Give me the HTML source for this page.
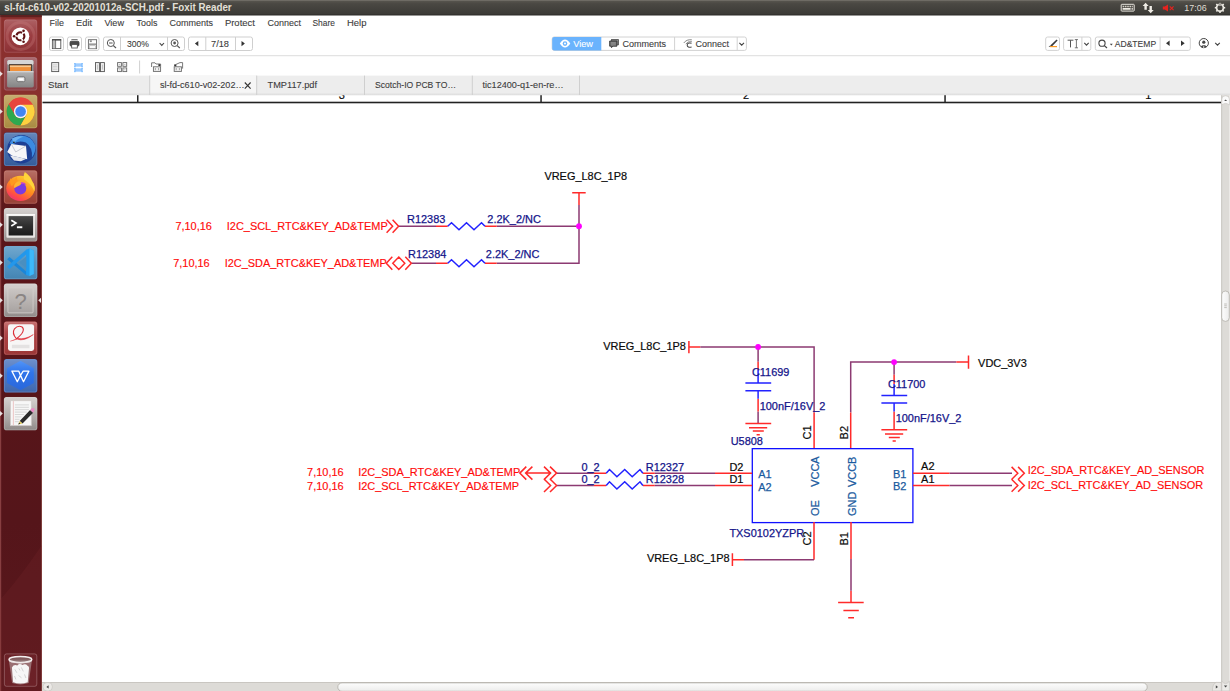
<!DOCTYPE html>
<html lang="en">
<head>
<meta charset="utf-8">
<title>sl-fd-c610-v02-20201012a-SCH.pdf - Foxit Reader</title>
<style>
html,body{margin:0;padding:0;background:#fff;}
body{width:1230px;height:691px;overflow:hidden;position:relative;font-family:"Liberation Sans",sans-serif;}
svg{position:absolute;left:0;top:0;display:block;}
text{font-family:"Liberation Sans",sans-serif;}
.ui{font-size:9.4px;fill:#3c3c3c;stroke:#3c3c3c;stroke-width:0.1px;}
.sch{font-size:10.95px;}
.red{fill:#ff0a0a;stroke:#ff0a0a;stroke-width:0.15px;}
.navy{fill:#14148a;stroke:#14148a;stroke-width:0.25px;}
.blk{fill:#0a0a0a;stroke:#0a0a0a;stroke-width:0.2px;}
.pin{fill:#1a5a9e;stroke:#1a5a9e;stroke-width:0.25px;}
.w{stroke:#8c3a72;stroke-width:1.5;fill:none;}
.r{stroke:#ff2a2a;stroke-width:1.5;fill:none;}
.b{stroke:#2222ff;stroke-width:1.5;fill:none;}
</style>
</head>
<body>
<svg width="1230" height="691" viewBox="0 0 1230 691">
<defs>
<linearGradient id="gTitle" x1="0" y1="0" x2="0" y2="1"><stop offset="0" stop-color="#5b5851"/><stop offset="0.25" stop-color="#4a4843"/><stop offset="1" stop-color="#3a3935"/></linearGradient>
<linearGradient id="gLaunch" x1="0" y1="0" x2="0" y2="1"><stop offset="0" stop-color="#8c302e"/><stop offset="0.155" stop-color="#88302d"/><stop offset="0.2" stop-color="#6e2023"/><stop offset="0.26" stop-color="#601a1d"/><stop offset="0.32" stop-color="#5a1519"/><stop offset="0.75" stop-color="#55151a"/><stop offset="1" stop-color="#5a181d"/></linearGradient>
<linearGradient id="gThumb" x1="0" y1="0" x2="0" y2="1"><stop offset="0" stop-color="#fdfdfd"/><stop offset="1" stop-color="#ececeb"/></linearGradient>
<linearGradient id="gThumbV" x1="0" y1="0" x2="1" y2="0"><stop offset="0" stop-color="#fdfdfd"/><stop offset="1" stop-color="#ececeb"/></linearGradient>
<linearGradient id="gGloss" x1="0" y1="0" x2="0" y2="1"><stop offset="0" stop-color="#fff" stop-opacity="0.22"/><stop offset="0.5" stop-color="#fff" stop-opacity="0.04"/><stop offset="1" stop-color="#000" stop-opacity="0.08"/></linearGradient>
<linearGradient id="gDrawer" x1="0" y1="0" x2="0" y2="1"><stop offset="0" stop-color="#b4b4b4"/><stop offset="1" stop-color="#858585"/></linearGradient>
<linearGradient id="gUnk" x1="0" y1="0" x2="0" y2="1"><stop offset="0" stop-color="#cbc6c4"/><stop offset="1" stop-color="#a7a2a0"/></linearGradient>
<linearGradient id="gFox" x1="0.8" y1="0.1" x2="0.25" y2="1"><stop offset="0" stop-color="#ffcb30"/><stop offset="0.45" stop-color="#ff8a1e"/><stop offset="0.8" stop-color="#ff4a4a"/><stop offset="1" stop-color="#f0307a"/></linearGradient>
<clipPath id="docClip"><rect x="42" y="95.2" width="1179.2" height="586.4"/></clipPath>
<linearGradient id="gTabSh" x1="0" y1="0" x2="0" y2="1"><stop offset="0" stop-color="#ededed"/><stop offset="1" stop-color="#d9d9d9"/></linearGradient>
<linearGradient id="gTerm" x1="0" y1="0" x2="0" y2="1"><stop offset="0" stop-color="#4a4a4a"/><stop offset="0.5" stop-color="#2e2e2e"/><stop offset="1" stop-color="#1c1c1c"/></linearGradient>
<linearGradient id="gGreyTile" x1="0" y1="0" x2="0" y2="1"><stop offset="0" stop-color="#c9c4c2"/><stop offset="1" stop-color="#9c9694"/></linearGradient>
<linearGradient id="gRedTile" x1="0" y1="0" x2="0" y2="1"><stop offset="0" stop-color="#b84a4a"/><stop offset="0.3" stop-color="#a63436"/><stop offset="1" stop-color="#a83a3a"/></linearGradient>
<linearGradient id="gWps" x1="0" y1="0" x2="0" y2="1"><stop offset="0" stop-color="#4f92f6"/><stop offset="0.4" stop-color="#2f74ea"/><stop offset="1" stop-color="#2a68dc"/></linearGradient>
</defs>

<!-- ===== window background ===== -->
<rect x="0" y="0" width="1230" height="691" fill="#ffffff"/>

<!-- ===== title / top panel ===== -->
<g id="titlebar">
<rect x="0" y="0" width="1230" height="15.3" fill="url(#gTitle)"/>
<rect x="0" y="0" width="1230" height="1" fill="#77756e" opacity="0.7"/>
<rect x="0" y="14.5" width="1230" height="0.8" fill="#2c2b28"/>
<text x="4.2" y="11.2" font-size="10.2" font-weight="bold" fill="#e4e0d8" textLength="227.5" lengthAdjust="spacingAndGlyphs">sl-fd-c610-v02-20201012a-SCH.pdf - Foxit Reader</text>
</g>

<!-- ===== menu bar ===== -->
<g id="menubar" class="ui">
<text x="49.5" y="26.1" textLength="14.4" lengthAdjust="spacingAndGlyphs">File</text>
<text x="76.1" y="26.1" textLength="16" lengthAdjust="spacingAndGlyphs">Edit</text>
<text x="104.4" y="26.1" textLength="19.6" lengthAdjust="spacingAndGlyphs">View</text>
<text x="136.6" y="26.1" textLength="20.8" lengthAdjust="spacingAndGlyphs">Tools</text>
<text x="169.5" y="26.1" textLength="43.5" lengthAdjust="spacingAndGlyphs">Comments</text>
<text x="224.9" y="26.1" textLength="30" lengthAdjust="spacingAndGlyphs">Protect</text>
<text x="267.5" y="26.1" textLength="33.5" lengthAdjust="spacingAndGlyphs">Connect</text>
<text x="312.5" y="26.1" textLength="22.5" lengthAdjust="spacingAndGlyphs">Share</text>
<text x="347" y="26.1" textLength="19.5" lengthAdjust="spacingAndGlyphs">Help</text>
</g>

<!-- ===== toolbar row 1 ===== -->
<g id="toolbar1">
<rect x="42" y="55.2" width="1188" height="1" fill="#dcdcdc"/>
<g fill="#fff" stroke="#cfcfcf" stroke-width="1">
<rect x="49.5" y="37" width="14" height="13.5" rx="2"/>
<rect x="67.5" y="37" width="14" height="13.5" rx="2"/>
<rect x="85.5" y="37" width="13.5" height="13.5" rx="2"/>
<rect x="103.5" y="37" width="81" height="13.5" rx="2"/>
<rect x="188.5" y="37" width="64" height="13.5" rx="2"/>
</g>
<g stroke="#cfcfcf" stroke-width="1">
<line x1="120.5" y1="37" x2="120.5" y2="50.5"/><line x1="167.5" y1="37" x2="167.5" y2="50.5"/>
<line x1="205.8" y1="37" x2="205.8" y2="50.5"/><line x1="235.5" y1="37" x2="235.5" y2="50.5"/>
</g>
<text class="ui" x="127" y="46.9" textLength="22" lengthAdjust="spacingAndGlyphs">300%</text>
<text class="ui" x="211" y="46.9" textLength="18" lengthAdjust="spacingAndGlyphs">7/18</text>
</g>

<!-- toolbar row 1 icons -->
<g id="tb1icons" fill="none" stroke="#4a4a4a" stroke-width="1">
<!-- panel toggle -->
<rect x="52.4" y="39.8" width="8.4" height="8.8" stroke="#555" stroke-width="0.9"/><rect x="52.9" y="40.6" width="2.4" height="7.6" fill="#b9b9b9" stroke="none"/><line x1="55.6" y1="39.8" x2="55.6" y2="48.6" stroke="#555" stroke-width="0.8"/><line x1="52" y1="39.8" x2="61.2" y2="39.8" stroke="#444" stroke-width="1.3"/>
<!-- printer -->
<path d="M71.4 39.5H77.6" stroke="#555" stroke-width="0.8"/><rect x="70" y="41.2" width="9" height="5" rx="1.4" fill="#4a4a4a" stroke="#3a3a3a" stroke-width="0.8"/><rect x="71.7" y="44.4" width="5.6" height="3.6" fill="#fff" stroke="#444" stroke-width="0.8"/>
<!-- save -->
<rect x="88.4" y="39.7" width="8.2" height="9" stroke="#666" stroke-width="0.9"/><rect x="89.8" y="40.3" width="2" height="1.8" fill="#8a8a8a" stroke="none"/><rect x="88.9" y="43.4" width="7.2" height="1.8" fill="#9a9a9a" stroke="none"/><rect x="89.6" y="45.8" width="5.8" height="2.4" fill="#fff" stroke="#9a9a9a" stroke-width="0.5"/>
<!-- zoom out -->
<circle cx="110.8" cy="43" r="3.5" stroke="#555"/><line x1="113.4" y1="45.6" x2="116" y2="48" stroke="#555" stroke-width="1.2"/><line x1="109" y1="43" x2="112.6" y2="43" stroke="#555"/>
<!-- dropdown chevron -->
<path d="M159.6 43L161.8 45.4L164 43" stroke="#444" stroke-width="1.1"/>
<!-- zoom in -->
<circle cx="174.6" cy="43" r="3.5" stroke="#555"/><line x1="177.2" y1="45.6" x2="179.8" y2="48" stroke="#555" stroke-width="1.2"/><circle cx="174.6" cy="43" r="1.4" fill="#555" stroke="none"/>
<!-- prev / next page -->
<path d="M198.3 41L194.9 43.6L198.3 46.2Z" fill="#333" stroke="none"/>
<path d="M241.5 41L244.9 43.6L241.5 46.2Z" fill="#333" stroke="none"/>
</g>
<!-- toolbar row 2 icons -->
<g id="tb2icons" fill="none" stroke="#5a5a5a" stroke-width="0.9">
<rect x="51.7" y="62.6" width="7" height="9" fill="#f1f1f1" stroke="#555"/><path d="M53 64.8H57.4M53 66.4H57.4M53 68H57.4M53 69.6H57.4" stroke="#c4c4c4" stroke-width="0.7"/>
<g stroke="#58a9ff" stroke-width="0.8"><rect x="74.9" y="64" width="7.2" height="2" fill="#cfe4ff"/><rect x="74.9" y="69" width="7.2" height="2" fill="#cfe4ff"/><path d="M74.9 63V64M82.1 63V64M74.9 66V67.2M82.1 66V67.2M74.9 67.8V69M82.1 67.8V69M74.9 71V72.2M82.1 71V72.2" stroke-width="1"/></g>
<rect x="95.5" y="62.6" width="3.9" height="9" fill="#f1f1f1" stroke="#555"/><rect x="100.5" y="62.6" width="3.9" height="9" fill="#f1f1f1" stroke="#555"/><path d="M97.45 64.6V69.6M102.45 64.6V69.6" stroke="#b5b5b5" stroke-width="0.8"/>
<g stroke="#666" stroke-width="0.9" fill="#fafafa"><rect x="117.6" y="62.6" width="3.8" height="3.7"/><rect x="122.9" y="62.6" width="3.8" height="3.7"/><rect x="117.6" y="67.9" width="3.8" height="3.7"/><rect x="122.9" y="67.9" width="3.8" height="3.7"/><path d="M118.8 64.5H120.2M124.1 64.5H125.5M118.8 69.8H120.2M124.1 69.8H125.5" stroke="#aaa" stroke-width="0.7"/></g>
<g stroke="#6a6a6a" stroke-width="0.9"><path d="M151.6 67V62.8H155L156 64H160.6V66.6"/><rect x="153.4" y="66.8" width="7.2" height="4.6" fill="#f2f2f2"/><path d="M155.4 68V70.2M158.6 68V70.2" stroke="#999"/><rect x="158.4" y="64.2" width="1.8" height="1.8" fill="#333" stroke="none"/></g>
<g stroke="#6a6a6a" stroke-width="0.9"><path d="M176 66.6V64.4L180 62.6H182.6V68.6"/><rect x="174.2" y="66.8" width="7.2" height="4.6" fill="#f2f2f2"/><path d="M176.2 68V70.2M179.4 68V70.2" stroke="#999"/><rect x="174.2" y="64.4" width="1.8" height="1.8" fill="#333" stroke="none"/></g>
</g>
<!-- centre mode buttons -->
<g id="modes">
<rect x="552.2" y="37" width="194.2" height="13.4" rx="2" fill="#fff" stroke="#d2d2d2" stroke-width="1"/>
<path d="M554.2 37H601.3V50.4H554.2A2 2 0 0 1 552.2 48.4V39A2 2 0 0 1 554.2 37Z" fill="#6ab3fd"/>
<line x1="674.6" y1="37" x2="674.6" y2="50.4" stroke="#d2d2d2"/><line x1="737.2" y1="37" x2="737.2" y2="50.4" stroke="#d2d2d2"/>
<!-- eye -->
<path d="M559.8 43.6Q565 35.6 570.3 43.6Q565 51.6 559.8 43.6Z" fill="#fff"/><circle cx="565" cy="43.6" r="2.3" fill="#6ab3fd"/><circle cx="565" cy="43.6" r="1" fill="#fff"/>
<text class="ui" x="573.2" y="46.7" fill="#ffffff" style="fill:#fff;stroke:#fff" textLength="19.8" lengthAdjust="spacingAndGlyphs">View</text>
<!-- comments icon -->
<rect x="611.4" y="39.6" width="7" height="5.2" fill="#8a8a8a" stroke="#4a4a4a" stroke-width="0.8"/><path d="M609.7 41H616.9V46.2H613L611.4 47.6V46.2H609.7Z" fill="#6e6e6e" stroke="#333" stroke-width="0.9" stroke-linejoin="round"/><path d="M610.8 42.6H615.8M610.8 43.8H615.8M610.8 45H615.8" stroke="#a8a8a8" stroke-width="0.5"/>
<text class="ui" x="622.4" y="46.7" textLength="43.7" lengthAdjust="spacingAndGlyphs">Comments</text>
<!-- connect icon -->
<g fill="none" stroke="#7a7a7a" stroke-width="0.9"><path d="M683.8 43Q686.4 39.2 691.8 39.8M685.8 44Q687.8 41.2 691.8 41.6"/><path d="M691.6 43.2Q687.2 42.2 687.2 45.2Q687.4 48 691.6 47" stroke="#4a4a4a" stroke-width="1.1"/></g>
<text class="ui" x="695.5" y="46.7" textLength="33.5" lengthAdjust="spacingAndGlyphs">Connect</text>
<path d="M739.4 42.8L741.7 45.2L744 42.8" fill="none" stroke="#444" stroke-width="1.1"/>
</g>

<!-- right side toolbar widgets -->
<g id="tbright">
<g fill="#fff" stroke="#d2d2d2" stroke-width="1">
<rect x="1045.7" y="37" width="13.8" height="13.4" rx="2"/>
<rect x="1063.6" y="37" width="27.2" height="13.4" rx="2"/>
<rect x="1095.3" y="37" width="95" height="13.4" rx="2"/>
<line x1="1081.9" y1="37" x2="1081.9" y2="50.4"/><line x1="1160.1" y1="37" x2="1160.1" y2="50.4"/>
</g>
<!-- highlighter -->
<path d="M1056.6 39.4L1057.6 40.4L1052.4 46L1050.6 46.4L1051 44.8Z" fill="#3b3b3b"/><path d="M1048.6 47L1050.4 45.2L1051.6 46.4Z" fill="#3b3b3b"/>
<rect x="1050.2" y="46" width="6.8" height="1.2" fill="#ff9a1f"/>
<!-- T I -->
<path d="M1067.6 40.2H1073.4M1070.5 40.2V47.4" stroke="#555" stroke-width="1" fill="none"/>
<path d="M1074.8 39.6H1078M1074.8 47.8H1078M1076.4 39.6V47.8" stroke="#555" stroke-width="0.8" fill="none"/>
<path d="M1084.3 42.8L1086.5 45.2L1088.7 42.8" stroke="#444" stroke-width="1.1" fill="none"/>
<!-- search -->
<circle cx="1102" cy="43.2" r="3.1" fill="none" stroke="#444" stroke-width="1.1"/><line x1="1104.3" y1="45.6" x2="1107" y2="48" stroke="#444" stroke-width="1.2"/>
<path d="M1109.8 43.8H1112.8L1111.3 45.4Z" fill="#444"/>
<text class="ui" x="1114.8" y="46.7" textLength="41.3" lengthAdjust="spacingAndGlyphs">AD&amp;TEMP</text>
<path d="M1169.6 40.6L1166 43.3L1169.6 46Z" fill="#333"/><path d="M1181 40.6L1184.7 43.3L1181 46Z" fill="#333"/>
<!-- user -->
<circle cx="1203.8" cy="43.1" r="4.6" fill="#fff" stroke="#444" stroke-width="1"/><circle cx="1203.8" cy="42.2" r="1.6" fill="#444"/><path d="M1200.6 46.6Q1203.8 43.4 1207 46.6Q1203.8 49 1200.6 46.6Z" fill="#444"/><rect x="1203.4" y="45.6" width="0.8" height="2.4" fill="#fff"/>
<path d="M1215.2 42.8L1217.5 45.2L1219.8 42.8" stroke="#444" stroke-width="1.1" fill="none"/>
</g>
<!-- top panel indicators -->
<g id="indicators">
<rect x="1121.2" y="4.3" width="13" height="6.8" rx="0.6" fill="#4a4843" stroke="#e8e5de" stroke-width="1"/>
<path d="M1122.6 6.4H1124.2M1124.9 6.4H1126.5M1127.2 6.4H1128.8M1129.5 6.4H1131.1M1131.8 6.4H1132.8" stroke="#d6d2c9" stroke-width="1.5" fill="none"/>
<path d="M1122.6 8.9H1130.6M1131.6 8.9H1132.8" stroke="#eeebe4" stroke-width="1.6" fill="none"/>
<path d="M1145.6 2.8L1148.6 6H1146.8V9.8H1144.4V6H1142.6Z" fill="#f0ede6"/>
<path d="M1150.7 13.2L1147.7 10H1149.5V6H1151.9V10H1153.7Z" fill="#f0ede6"/>
<path d="M1162.8 6.6H1164.8L1168 4.6V11.4L1164.8 9.6H1162.8Z" fill="#e6231f"/>
<path d="M1169.8 6.4L1173.6 10.2M1173.6 6.4L1169.8 10.2" stroke="#e6231f" stroke-width="1.1" fill="none"/>
<text x="1184.3" y="10.7" font-size="9.6" fill="#dfdbd2" textLength="22.3" lengthAdjust="spacingAndGlyphs">17:06</text>
<g transform="translate(1220 7.7)"><circle r="3.4" fill="none" stroke="#ece9e2" stroke-width="1.7"/><g stroke="#ece9e2" stroke-width="1.6"><line x1="0" y1="-5.2" x2="0" y2="-3.6" transform="rotate(45)"/><line x1="0" y1="-5.2" x2="0" y2="-3.6" transform="rotate(90)"/><line x1="0" y1="-5.2" x2="0" y2="-3.6" transform="rotate(135)"/><line x1="0" y1="-5.2" x2="0" y2="-3.6" transform="rotate(180)"/><line x1="0" y1="-5.2" x2="0" y2="-3.6" transform="rotate(225)"/><line x1="0" y1="-5.2" x2="0" y2="-3.6" transform="rotate(270)"/><line x1="0" y1="-5.2" x2="0" y2="-3.6" transform="rotate(315)"/></g><rect x="-1.2" y="-5" width="2.4" height="4.4" fill="#45433e"/><line x1="0" y1="-5" x2="0" y2="-1.6" stroke="#ece9e2" stroke-width="1.1"/></g>
</g>

<!-- ===== toolbar row 2 ===== -->
<g id="toolbar2">
<line x1="139.6" y1="60.5" x2="139.6" y2="73.5" stroke="#d0d0d0" stroke-width="1"/>
</g>

<!-- ===== tab bar ===== -->
<g id="tabbar">
<rect x="42" y="75.6" width="1188" height="19.6" fill="#ededed"/>
<rect x="149.7" y="75.6" width="107" height="19.6" fill="#f6f6f6"/>
<rect x="42" y="92.6" width="1188" height="2.6" fill="url(#gTabSh)" opacity="0.85"/>
<g stroke="#cfcfcf" stroke-width="1">
<line x1="149.7" y1="75.6" x2="149.7" y2="95"/><line x1="256.7" y1="75.6" x2="256.7" y2="95"/>
<line x1="364.5" y1="75.6" x2="364.5" y2="95"/><line x1="472.3" y1="75.6" x2="472.3" y2="95"/>
<line x1="579.5" y1="75.6" x2="579.5" y2="95"/>
</g>
<g class="ui" fill="#2e2e2e">
<text x="48" y="88.4" textLength="20.3" lengthAdjust="spacingAndGlyphs">Start</text>
<text x="159.9" y="88.4" textLength="84.6" lengthAdjust="spacingAndGlyphs">sl-fd-c610-v02-202…</text>
<text x="267.5" y="88.4" textLength="49.5" lengthAdjust="spacingAndGlyphs">TMP117.pdf</text>
<text x="375" y="88.4" textLength="81" lengthAdjust="spacingAndGlyphs">Scotch-IO PCB TO…</text>
<text x="482.5" y="88.4" textLength="81" lengthAdjust="spacingAndGlyphs">tic12400-q1-en-re…</text>
</g>
<path d="M244.8 82.5 L250.6 88.6 M250.6 82.5 L244.8 88.6" stroke="#333" stroke-width="1.1" fill="none"/>
</g>

<!-- ===== document ruler ===== -->
<g id="ruler">
<g clip-path="url(#docClip)" class="sch blk"><text x="338.8" y="99.1">3</text><text x="742.9" y="99.1">2</text><text x="1145.3" y="99.1">1</text></g>
<rect x="42.5" y="101.7" width="1178.7" height="1.6" fill="#222"/>
<rect x="137" y="95.2" width="1.5" height="7" fill="#222"/>
<rect x="540.3" y="95.2" width="1.5" height="7" fill="#222"/>
<rect x="944.3" y="95.2" width="1.5" height="7" fill="#222"/>
</g>

<!-- ===== schematic ===== -->
<g id="schematic" class="sch">
<!-- circuit 1 : pull-ups -->
<text class="blk" x="544.4" y="179.5">VREG_L8C_1P8</text>
<path class="r" d="M572.2 192.8H585.7M579 192.8V205"/>
<path class="w" d="M579 205V263.2H496.7M579 226.2H496.7M398.6 226.2H436M411.3 263.2H436"/>
<path class="r" d="M436 226.2H447.7M485 226.2H496.7M436 263.2H447.7M485 263.2H496.7"/>
<path class="b" d="M447.7 226.2L451.5 222.7L459 229.8L466.5 222.7L474 229.8L481.5 222.7L485 226.2"/>
<path class="b" d="M447.7 263.2L451.5 259.7L459 266.8L466.5 259.7L474 266.8L481.5 259.7L485 263.2"/>
<circle cx="579" cy="226.2" r="2.9" fill="#ff00ff"/>
<text class="navy" x="407.0" y="222.8">R12383</text>
<text class="navy" x="408.0" y="258.3">R12384</text>
<text class="navy" x="487.3" y="222.8">2.2K_2/NC</text>
<text class="navy" x="485.8" y="258.3">2.2K_2/NC</text>
<text class="red" x="175.4" y="229.8">7,10,16</text>
<text class="red" x="226.8" y="229.8">I2C_SCL_RTC&amp;KEY_AD&amp;TEMP</text>
<text class="red" x="173.2" y="266.8">7,10,16</text>
<text class="red" x="224.7" y="266.8">I2C_SDA_RTC&amp;KEY_AD&amp;TEMP</text>
<!-- port symbols circuit 1 -->
<path class="r" d="M386.6 219.7L392.6 226.2L386.6 232.7M392.6 219.7L398.6 226.2L392.6 232.7"/>
<path class="r" d="M392.3 256.7L386.3 263.2L392.3 269.7M405.3 256.7L411.3 263.2L405.3 269.7M392.8 263.2L398.8 257L404.8 263.2L398.8 269.4Z"/>

<!-- circuit 2 : level shifter -->
<!-- VCCA net -->
<text class="blk" x="603.2" y="349.5">VREG_L8C_1P8</text>
<path class="r" d="M688.9 341V353.3M688.9 346.9H700.4"/>
<path class="w" d="M700.4 346.9H814.1V412.5M758.1 346.9V361.7M758.1 411.4V423.4"/>
<path class="r" d="M814.1 412.5V449M758.1 361.7V370M758.1 398.7V411.4"/>
<path class="b" d="M758.1 370V382.9M745.4 382.9H771.2M745.4 390.7H771.2M758.1 390.7V398.7"/>
<path class="r" d="M745.4 423.4H771.2M749 427.7H767.2M752.8 431H763.8M756.6 434.7H759.8"/>
<circle cx="758.1" cy="346.9" r="2.9" fill="#ff00ff"/>
<text class="navy" x="751.9" y="375.5">C11699</text>
<text class="navy" x="759.7" y="410.3">100nF/16V_2</text>
<text class="navy" x="730.7" y="444.8">U5808</text>
<!-- VCCB net -->
<path class="w" d="M850.7 412.5V362.1H956.4M894.1 362.1V374.8"/>
<path class="r" d="M850.7 412.5V449M956.4 362.1H968.5M968.5 355.4V368.7M894.1 374.8V384M894.1 411.4V429.8"/>
<path class="b" d="M894.1 384V395.5M881.4 395.5H907.2M881.4 402.9H907.2M894.1 402.9V411.4"/>
<path class="r" d="M881.4 429.8H907.2M885 434H903.2M888.8 437.4H899.8M892.6 441H895.8"/>
<circle cx="894.1" cy="362.1" r="2.9" fill="#ff00ff"/>
<text class="blk" x="978.1" y="367">VDC_3V3</text>
<text class="navy" x="887.9" y="387.7">C11700</text>
<text class="navy" x="895.7" y="422.4">100nF/16V_2</text>
<!-- IC body -->
<rect x="752.3" y="448.65" width="160.6" height="73.95" fill="none" stroke="#1010ff" stroke-width="1.3"/>
<text class="pin" x="758.3" y="478">A1</text>
<text class="pin" x="758.3" y="490.7">A2</text>
<text class="pin" x="892.9" y="477.6">B1</text>
<text class="pin" x="892.9" y="490.3">B2</text>
<text class="pin" transform="translate(819.3 486.8) rotate(-90)">VCCA</text>
<text class="pin" transform="translate(819.3 516.0) rotate(-90)">OE</text>
<text class="pin" transform="translate(856.1 487.0) rotate(-90)">VCCB</text>
<text class="pin" transform="translate(856.1 516.0) rotate(-90)">GND</text>
<text class="blk" transform="translate(811.2 439.4) rotate(-90)">C1</text>
<text class="blk" transform="translate(848.4 439.4) rotate(-90)">B2</text>
<text class="blk" transform="translate(811.0 545.5) rotate(-90)">C2</text>
<text class="blk" transform="translate(848.2 545.5) rotate(-90)">B1</text>
<text class="navy" x="729.4" y="537.3">TXS0102YZPR</text>
<!-- bottom pins -->
<path class="r" d="M814 522V559.7M851 522V559M851 590.8V602.6M838.1 602.6H863.7M843.4 610.4H858.8M848.2 617.8H854M744 559.7H732.4M732.4 553.3V566"/>
<path class="w" d="M814 559.7H744M851 559V590.8"/>
<text class="blk" x="646.9" y="561.8">VREG_L8C_1P8</text>
<!-- left side nets -->
<path class="r" d="M752 473.2H715M752 485.5H715M654.8 473.2H642.9M654.8 485.5H642.9M593.9 473.2H606.2M593.9 485.5H606.2"/>
<path class="w" d="M715 473.2H654.8M715 485.5H654.8M556.6 473.2H593.9M556.6 485.5H593.9"/>
<path class="b" d="M606.2 473.2L609.5 469.5L616.9 476.7L624.7 469.5L632.2 476.7L640 469.5L642.9 473.2"/>
<path class="b" d="M606.2 485.5L609.5 481.8L616.9 489L624.7 481.8L632.2 489L640 481.8L642.9 485.5"/>
<text class="navy" x="645.8" y="471">R12327</text>
<text class="navy" x="645.8" y="483.3">R12328</text>
<text class="navy" x="581.4" y="470.8">0_2</text>
<text class="navy" x="581.4" y="482.9">0_2</text>
<text class="blk" x="729.4" y="471">D2</text>
<text class="blk" x="729.4" y="483.3">D1</text>
<path class="r" d="M526.3 466.6L519.8 473.1L526.3 479.6M532.4 466.6L525.6 473.1L532.4 479.6M525.6 473.1H550.3M544 466.6L550.6 473.1L544 479.6M550 466.6L556.6 473.1L550 479.6"/>
<path class="r" d="M544 479L550.6 485.5L544 492M550 479L556.6 485.5L550 492"/>
<text class="red" x="307.1" y="475.9">7,10,16</text>
<text class="red" x="358.2" y="475.9">I2C_SDA_RTC&amp;KEY_AD&amp;TEMP</text>
<text class="red" x="307.1" y="489.6">7,10,16</text>
<text class="red" x="358.2" y="489.6">I2C_SCL_RTC&amp;KEY_AD&amp;TEMP</text>
<!-- right side nets -->
<path class="r" d="M913 473.2H949.6M913 485.5H949.6"/>
<path class="w" d="M949.6 473.2H1012M949.6 485.5H1012"/>
<path class="r" d="M1011.6 466.9L1017.8 473.2L1011.6 479.5M1018.1 466.9L1024.3 473.2L1018.1 479.5M1011.6 479.2L1017.8 485.5L1011.6 491.8M1018.1 479.2L1024.3 485.5L1018.1 491.8"/>
<text class="blk" x="921.1" y="470.2">A2</text>
<text class="blk" x="921.1" y="482.5">A1</text>
<text class="red" x="1027.7" y="474.1">I2C_SDA_RTC&amp;KEY_AD_SENSOR</text>
<text class="red" x="1027.7" y="489.2">I2C_SCL_RTC&amp;KEY_AD_SENSOR</text>
</g>


<!-- ===== scrollbars ===== -->
<g id="scrollbars">
<!-- horizontal -->
<rect x="42" y="682" width="1180" height="9" fill="#dddbd7"/>
<rect x="42" y="682" width="1180" height="1" fill="#c9c6c1"/>
<rect x="43" y="682.6" width="9.4" height="8.4" rx="4" fill="#ebe9e6" stroke="#c4c1bc" stroke-width="0.6"/>
<path d="M48.6 685.2L46.4 686.9L48.6 688.6Z" fill="#444"/>
<rect x="337.8" y="682.9" width="809.4" height="8.4" rx="4.2" fill="url(#gThumb)" stroke="#aaa7a1" stroke-width="0.7"/>
<path d="M1221.4 682.4H1216.4Q1212.4 683.4 1212.4 691H1221.4Z" fill="#e9e7e4" stroke="#c4c1bc" stroke-width="0.6"/>
<path d="M1215.8 685.2L1218 686.9L1215.8 688.6Z" fill="#444"/>
<!-- vertical -->
<rect x="1221.2" y="95.2" width="8.8" height="596" fill="#dddbd7"/>
<rect x="1221.2" y="95.2" width="1" height="596" fill="#c9c6c1"/>
<rect x="1229" y="95.2" width="1" height="596" fill="#ebe9e6"/>
<path d="M1221.8 105V99.2Q1221.8 95.7 1225.6 95.7Q1229.4 95.7 1229.4 99.2V105Q1225.6 101.8 1221.8 105Z" fill="#fafafa" stroke="#c4c1bc" stroke-width="0.6"/>
<path d="M1224.1 101L1225.6 99.4L1227.1 101Z" fill="#555"/>
<rect x="1221.7" y="291" width="7.6" height="30.4" rx="3.8" fill="url(#gThumbV)" stroke="#aaa7a1" stroke-width="0.7"/>
<path d="M1224.2 304H1226.8M1224.2 305.8H1226.8M1224.2 307.6H1226.8" stroke="#a9a6a0" stroke-width="0.7" fill="none"/>
<path d="M1221.8 681.2Q1225.6 686 1229.4 681.2V691H1221.8Z" fill="#ecebe8" stroke="#c4c1bc" stroke-width="0.6"/>
<path d="M1223.9 685.4L1225.6 687.4L1227.3 685.4Z" fill="#444"/>
</g>


<!--LAUNCHER_START-->
<!-- ===== launcher ===== -->
<g id="launcher">
<rect x="0" y="15" width="41.9" height="676" fill="url(#gLaunch)"/>
<rect x="0" y="15" width="1.2" height="676" fill="#b06060" opacity="0.55"/>
<rect x="41" y="15" width="0.9" height="676" fill="#b86a5a" opacity="0.35"/>
<rect x="0" y="15" width="42" height="2.2" fill="#3a1414" opacity="0.55"/>
<path d="M0 600Q22 575 41.9 545V691H0Z" fill="#7a2a2e" opacity="0.22"/>
<g transform="translate(3.9 19.3)"><rect x="0" y="0" width="33.4" height="33.4" rx="2.6" fill="#963438"/><rect x="0.5" y="0.5" width="32.4" height="32.4" rx="2.2" fill="url(#gGloss)" stroke="#ffffff" stroke-opacity="0.14" stroke-width="1"/><circle cx="16.7" cy="16.7" r="13.5" fill="none" stroke="#c98080" stroke-opacity="0.3" stroke-width="3"/><circle cx="16.5" cy="17" r="8.9" fill="#ffffff"/><circle cx="16.5" cy="17" r="4" fill="none" stroke="#5e1214" stroke-width="2.1" stroke-dasharray="6.78 1.6" stroke-dashoffset="3.39"/><circle cx="10.2" cy="17" r="1.3" fill="#5e1214"/><circle cx="19.65" cy="11.54" r="1.3" fill="#5e1214"/><circle cx="19.65" cy="22.46" r="1.3" fill="#5e1214"/></g>
<g transform="translate(3.9 57.1)"><rect x="0" y="0" width="33.4" height="33.4" rx="2.6" fill="#93444a"/><rect x="0.5" y="0.5" width="32.4" height="32.4" rx="2.2" fill="url(#gGloss)" stroke="#ffffff" stroke-opacity="0.14" stroke-width="1"/><rect x="3.4" y="2.8" width="26.2" height="27.4" rx="1.6" fill="#8d8d8d"/><rect x="3.4" y="2.8" width="26.2" height="5" rx="1.6" fill="#d6d6d6"/><rect x="5" y="7" width="23" height="7.4" fill="#4a3a30"/><rect x="6" y="8.4" width="21" height="6" fill="#f0913a"/><rect x="6" y="8.4" width="21" height="1.6" fill="#f8c890"/><rect x="3.4" y="14" width="26.2" height="16.2" rx="1.2" fill="url(#gDrawer)"/><rect x="3.4" y="14" width="26.2" height="1.2" fill="#d6d6d6"/><rect x="13" y="19.8" width="8" height="4.8" rx="1.2" fill="#ececec" stroke="#666" stroke-width="0.9"/><rect x="15" y="21.4" width="4" height="1.6" fill="#fff"/></g>
<g transform="translate(3.9 94.8)"><rect x="0" y="0" width="33.4" height="33.4" rx="2.6" fill="#b69648"/><rect x="0.5" y="0.5" width="32.4" height="32.4" rx="2.2" fill="url(#gGloss)" stroke="#ffffff" stroke-opacity="0.14" stroke-width="1"/><circle cx="16.7" cy="16.7" r="13.9" fill="#e8453c"/><path d="M16.70 10.00L28.88 10.00A13.9 13.9 0 0 0 4.81 9.50L10.90 20.05A6.7 6.7 0 0 1 16.70 10.00Z" fill="#e8453c"/><path d="M22.50 20.05L16.41 30.60A13.9 13.9 0 0 0 28.88 10.00L16.70 10.00A6.7 6.7 0 0 1 22.50 20.05Z" fill="#fdd23e"/><path d="M10.90 20.05L4.81 9.50A13.9 13.9 0 0 0 16.41 30.60L22.50 20.05A6.7 6.7 0 0 1 10.90 20.05Z" fill="#2da94f"/><circle cx="16.7" cy="16.7" r="6.7" fill="#f4f4f4"/><circle cx="16.7" cy="16.7" r="5.3" fill="#4285f4"/></g>
<g transform="translate(3.9 132.6)"><rect x="0" y="0" width="33.4" height="33.4" rx="2.6" fill="#3a64a6"/><rect x="0.5" y="0.5" width="32.4" height="32.4" rx="2.2" fill="url(#gGloss)" stroke="#ffffff" stroke-opacity="0.14" stroke-width="1"/><circle cx="17.5" cy="16.7" r="14.2" fill="#1d3f94"/><path d="M5.6 11Q8 4.4 17 2.8Q28 3.4 31.4 13Q32 20 28 25Q29 15 22 10Q14 7 9 12Z" fill="#3b8ae0"/><path d="M8 6Q14 2.6 20 4Q13 6 10 11Z" fill="#6ab0f0"/><path d="M3.3 19.4L7.5 11.5L22.1 13.3L23.3 26.7L8.2 23.1Z" fill="#f6f6f8"/><path d="M7.5 11.5L11.8 19.4L22.1 13.3" fill="none" stroke="#bfc3cc" stroke-width="0.9"/><path d="M6 23L10 28L17 28.6L22 26.4L12 24Z" fill="#e6e8ee"/><circle cx="10" cy="9.7" r="0.9" fill="#222"/></g>
<g transform="translate(3.9 170.3)"><rect x="0" y="0" width="33.4" height="33.4" rx="2.6" fill="#a4463a"/><rect x="0.5" y="0.5" width="32.4" height="32.4" rx="2.2" fill="url(#gGloss)" stroke="#ffffff" stroke-opacity="0.14" stroke-width="1"/><ellipse cx="16.6" cy="18" rx="14.2" ry="12.6" fill="url(#gFox)"/><path d="M20.9 1.8Q27 6 28.6 12Q31.4 16 30.6 21Q26 12 20 9Q19 5 20.9 1.8Z" fill="#ffd43a"/><path d="M6.4 8Q8 10 10 10Q11 7.4 13 6.6Q12.6 9 14 10.6Q10 12 8 16Q5.4 13 6.4 8Z" fill="#ff9a1f"/><circle cx="16.4" cy="18.2" r="6" fill="#7a3be0"/><path d="M12 12.4Q16 9.6 20.6 12.4Q17 12.6 16 15Q12.6 16.4 10.4 18Q9.4 14.6 12 12.4Z" fill="#ffb52e"/><path d="M16.4 12.2Q21 11 22.6 14.6Q20 13.4 18 14Z" fill="#c23fd0"/></g>
<g transform="translate(3.9 208.1)"><rect x="0" y="0" width="33.4" height="33.4" rx="2.6" fill="url(#gGreyTile)"/><rect x="0.5" y="0.5" width="32.4" height="32.4" rx="2.2" fill="url(#gGloss)" stroke="#ffffff" stroke-opacity="0.14" stroke-width="1"/><rect x="2.5" y="6.1" width="28.6" height="23.6" rx="1" fill="#e9e7e5"/><rect x="2.5" y="6.1" width="28.6" height="1.2" fill="#ffffff"/><rect x="4.7" y="8" width="24.5" height="19.4" fill="url(#gTerm)"/><path d="M7.4 12.1L12 15L7.4 17.9" fill="none" stroke="#fff" stroke-width="1.7"/><rect x="13" y="18.2" width="5.4" height="1.9" fill="#fff"/></g>
<g transform="translate(3.9 245.9)"><rect x="0" y="0" width="33.4" height="33.4" rx="2.6" fill="#4a8fc0"/><rect x="0.5" y="0.5" width="32.4" height="32.4" rx="2.2" fill="url(#gGloss)" stroke="#ffffff" stroke-opacity="0.14" stroke-width="1"/><path d="M3.2 13.4L5.6 11.2L24 27L22.6 29.6Z" fill="#1b86d8"/><path d="M3.2 20.6L5.6 23L24 7L22.6 3.7Z" fill="#2497ea"/><path d="M22.2 3.9L25.6 2.7L29.9 4.8V28.2L25.6 30.2L22.2 29Z" fill="#1f9cf0"/><path d="M25.6 2.7L29.9 4.8V28.2L25.6 30.2Z" fill="#3db8fa"/><path d="M22.4 10.6V22.4L15.2 16.5Z" fill="#4a8fc0"/></g>
<g transform="translate(3.9 283.6)"><rect x="0" y="0" width="33.4" height="33.4" rx="2.6" fill="url(#gGreyTile)"/><rect x="0.5" y="0.5" width="32.4" height="32.4" rx="2.2" fill="url(#gGloss)" stroke="#ffffff" stroke-opacity="0.14" stroke-width="1"/><rect x="4" y="4.3" width="25.2" height="25" rx="1" fill="url(#gUnk)" stroke="#d4cfcd" stroke-width="0.8"/><text x="16.7" y="25.2" text-anchor="middle" font-size="22" fill="#8a8584">?</text></g>
<g transform="translate(3.9 321.4)"><rect x="0" y="0" width="33.4" height="33.4" rx="2.6" fill="url(#gRedTile)"/><rect x="0.5" y="0.5" width="32.4" height="32.4" rx="2.2" fill="url(#gGloss)" stroke="#ffffff" stroke-opacity="0.14" stroke-width="1"/><rect x="4.1" y="2.8" width="26.1" height="26.8" rx="2.4" fill="#f7f6f6"/><rect x="8" y="23.4" width="17.6" height="3.4" fill="#e4e2e2"/><path d="M6.3 19.8Q11 18.6 13 17.6Q20 20.6 29.4 13.2Q21 18.6 13.4 16.8" fill="#e0343c" stroke="#e0343c" stroke-width="0.5" stroke-linejoin="round"/><path d="M12.6 17.4Q7.6 12 10.6 7.4Q14 3.6 18.2 5.6Q21 8 17.6 12.6Q15 15.6 12.6 17.4Z" fill="none" stroke="#dc2f38" stroke-width="1.1"/></g>
<g transform="translate(3.9 359.1)"><rect x="0" y="0" width="33.4" height="33.4" rx="2.6" fill="#4470bc"/><rect x="0.5" y="0.5" width="32.4" height="32.4" rx="2.2" fill="url(#gGloss)" stroke="#ffffff" stroke-opacity="0.14" stroke-width="1"/><path d="M16.6 2.6L29.2 9.5V23.5L16.6 30.2L3.8 23.5V9.5Z" fill="url(#gWps)" stroke="url(#gWps)" stroke-width="1.4" stroke-linejoin="round"/><path d="M8 12H14.8L16.6 16.3L19.3 12H25L19.6 22.6L16.6 16.3L13.4 22.6Z" fill="none" stroke="#fff" stroke-width="1.3" stroke-linejoin="round"/></g>
<g transform="translate(3.9 396.9)"><rect x="0" y="0" width="33.4" height="33.4" rx="2.6" fill="url(#gGreyTile)"/><rect x="0.5" y="0.5" width="32.4" height="32.4" rx="2.2" fill="url(#gGloss)" stroke="#ffffff" stroke-opacity="0.14" stroke-width="1"/><rect x="6.5" y="3.8" width="20.9" height="24.9" fill="#f7f7f7" stroke="#cfc9c7" stroke-width="0.8"/><rect x="9" y="4.2" width="0.7" height="24.1" fill="#e8b0b0"/><path d="M11 8H25M11 10.4H25M11 12.8H25M11 15.2H23M11 17.6H20M11 20H17.6M11 22.4H15.6M11 24.8H15" stroke="#d2d2d2" stroke-width="0.9"/><path d="M26.2 13L29.2 15.8L18.6 26.6L15.8 24Z" fill="#2a2a2a"/><path d="M26.2 13L27.8 11.4Q29.6 10.2 31 12.4L29.2 15.8Z" fill="#e88cc4"/><path d="M15.8 24L18.6 26.6L14.4 27.6Z" fill="#e6d060"/><path d="M14.4 27.6L15.2 25.6L16.4 26.8Z" fill="#333"/></g>
<path d="M0 71.2L2.8 73.8L0 76.4Z" fill="#e8e0e0"/>
<path d="M0 108.9L2.8 111.5L0 114.1Z" fill="#e8e0e0"/>
<path d="M0 146.7L2.8 149.3L0 151.9Z" fill="#e8e0e0"/>
<path d="M0 184.4L2.8 187.0L0 189.6Z" fill="#e8e0e0"/>
<path d="M0 222.2L2.8 224.8L0 227.4Z" fill="#e8e0e0"/>
<path d="M0 260.0L2.8 262.6L0 265.2Z" fill="#e8e0e0"/>
<path d="M0 297.7L2.8 300.3L0 302.9Z" fill="#e8e0e0"/>
<path d="M0 335.5L2.8 338.1L0 340.7Z" fill="#e8e0e0"/>
<path d="M0 373.2L2.8 375.8L0 378.4Z" fill="#e8e0e0"/>
<path d="M0 411.0L2.8 413.6L0 416.2Z" fill="#e8e0e0"/>
<path d="M41 297.7L38.2 300.3L41 302.9Z" fill="#e8e0e0"/>
<g transform="translate(3.9 653.4)"><rect x="0" y="0" width="33.4" height="33.4" rx="2.6" fill="#7a2a30" fill-opacity="0.45"/><rect x="0.5" y="0.5" width="32.4" height="32.4" rx="2.2" fill="none" stroke="#fff" stroke-opacity="0.22"/><path d="M4.9 6.4L8.2 29.6Q16.5 32.4 24.8 29.6L28.1 6.4Z" fill="#c9c0c0" fill-opacity="0.5"/><path d="M8 14Q10 10.6 13.4 12Q15.6 9.6 18.6 11.6Q21.6 10 23.6 12.4Q25.6 13 25 16L23.8 28.8Q16.5 31.2 9.2 28.8Z" fill="#f6f6f6"/><path d="M11 16L13 19.4M17.4 14L19.4 18M14.6 22L17.6 24.4M10.6 22.6L12 26M20.6 21L22 24.6M15 15L16 17" stroke="#cfcfcf" stroke-width="0.9" fill="none"/><ellipse cx="16.5" cy="6" rx="11.4" ry="3" fill="#8a7474" fill-opacity="0.7" stroke="#f4f0f0" stroke-width="1.5"/><path d="M7 8.4Q16.5 11.4 26 8.4" fill="none" stroke="#e6dede" stroke-width="0.9" opacity="0.8"/></g>
</g>
<!--LAUNCHER_END-->

</svg>
</body>
</html>
